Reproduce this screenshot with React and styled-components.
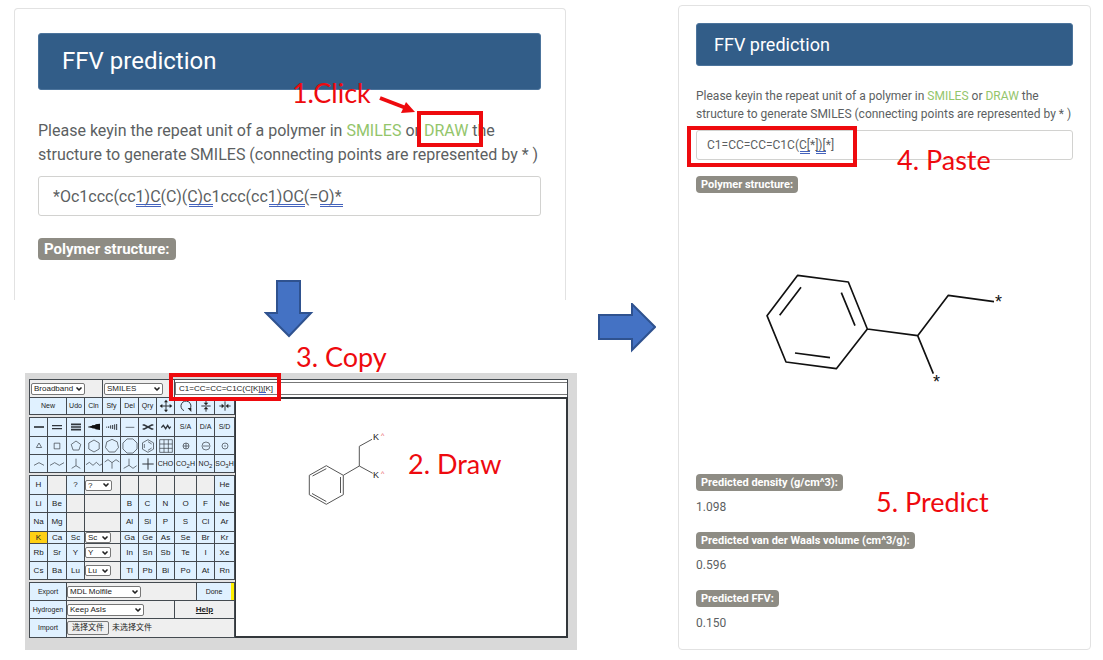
import React from "react";
import styled, { createGlobalStyle, css } from "styled-components";
import { ChevronDown } from "lucide-react";

const GlobalStyle = createGlobalStyle`
  *, *::before, *::after { box-sizing: border-box; }
  body { margin: 0; background: #fff; font-family: Roboto, "Liberation Sans", sans-serif; color: #5c5f62; }
  button, input, select { font: inherit; color: inherit; margin: 0; }
`;

const RED = "#ee0a0e";
const LINE = "#444a50";
const ARIAL = '"Liberation Sans", "Noto Sans CJK SC", sans-serif';

/* ---------- page ---------- */

const Page = styled.main`
  display: grid;
  grid-template-columns: 563fr 101fr 413fr;
  padding: 5px 12px 8px 14px;
`;

const LeftColumn = styled.div`
  display: flex;
  flex-direction: column;
  padding-top: 3px;
  min-width: 0;
`;

const MiddleColumn = styled.div`
  display: flex;
  align-items: center;
  justify-content: center;
  padding-right: 2px;
`;

const DownRow = styled.div`
  display: flex;
  justify-content: center;
  margin-top: -20px;
  padding-right: 13px;
`;

const BlockArrow = styled.svg`
  display: block;
  fill: #4472c4;
  stroke: #2f528f;
  stroke-width: 2;
`;

/* ---------- annotations ---------- */

const Note = styled.span`
  font-family: Lato, "Liberation Sans", sans-serif;
  font-size: 27px;
  line-height: 30px;
  font-weight: 400;
  color: ${RED};
  white-space: nowrap;
`;

const FloatingNote = styled(Note)`
  position: absolute;
  left: ${(p) => p.$left}px;
  top: ${(p) => p.$top}px;
  pointer-events: none;
`;

const CopyNote = styled(Note)`
  padding: 4px 0 1px 282px;
`;

const Highlight = styled.span`
  position: absolute;
  left: ${(p) => p.$left}px;
  top: ${(p) => p.$top}px;
  width: ${(p) => p.$width}px;
  height: ${(p) => p.$height}px;
  border: 4px solid ${RED};
  pointer-events: none;
`;

const Pointer = styled.svg`
  position: absolute;
  left: -46px;
  top: -24px;
  pointer-events: none;
`;

/* ---------- prediction card ---------- */

const Card = styled.section`
  border: 1px solid #e2e2e2;
  border-radius: 4px;
  padding: 17px;
  font-size: 12px;
  line-height: 18px;
  ${(p) =>
    p.$large &&
    css`
      margin-right: 11px;
      padding: 24px 24px 40px 23px;
      border-bottom: 0;
      border-radius: 4px 4px 0 0;
      font-size: 16px;
      line-height: 24px;
    `}
`;

const CardTitle = styled.h1`
  margin: 0;
  padding: ${(p) => (p.$large ? "12px 23px" : "8px 17px")};
  border: 1px solid #4c749c;
  border-radius: 3px;
  background: #325d88;
  color: #fff;
  font-weight: 400;
  font-size: ${(p) => (p.$large ? 24 : 18)}px;
  line-height: ${(p) => (p.$large ? 31 : 25)}px;
`;

const Prompt = styled.label`
  display: block;
  margin: ${(p) => (p.$large ? "29px 0 9px" : "21px 0 7px")};
  white-space: nowrap;
`;

const GreenLink = styled.a`
  position: relative;
  display: inline-block;
  color: #93c56b;
  text-decoration: none;
`;

const Field = styled.div`
  position: relative;
`;

const SmilesInput = styled.input`
  display: block;
  width: 100%;
  height: ${(p) => (p.$large ? 40 : 30)}px;
  padding: 0 ${(p) => (p.$large ? 14 : 10)}px;
  border: 1px solid #d2d2d0;
  border-radius: 3px;
  background: #fff;
  outline: 0;
`;

const SpellMark = styled.i`
  position: absolute;
  left: ${(p) => p.$left}px;
  top: ${(p) => p.$top}px;
  width: ${(p) => p.$width}px;
  height: 3px;
  border: solid #4463bd;
  border-width: 1px 0;
  pointer-events: none;
`;

const Badge = styled.span`
  display: block;
  width: fit-content;
  padding: 0 ${(p) => (p.$large ? 6 : 5)}px;
  border-radius: 4px;
  background: #8e8c84;
  color: #fff;
  font-weight: 700;
  font-size: ${(p) => (p.$large ? 15 : 11)}px;
  line-height: ${(p) => (p.$large ? 22 : 17)}px;
`;

const StructureLabel = styled.div`
  margin-top: ${(p) => (p.$large ? 22 : 16)}px;
`;

const Structure = styled.div`
  padding: 57px 0 74px 44px;
  svg { display: block; }
`;

const Results = styled.dl`
  position: relative;
  display: grid;
  gap: 16px;
  margin: 0;
  dt { margin: 0 0 7px; }
  dd { margin: 0; }
`;

/* ---------- structure editor ---------- */

const Editor = styled.section`
  margin-left: 11px;
  padding: 6px 9px 12px 4px;
  background: #d9d9d9;
  font-family: ${ARIAL};
  font-size: 8px;
  line-height: 10px;
  color: #222;
`;

const FormatBar = styled.div`
  display: grid;
  grid-template-columns: 72px 71px 1fr;
  gap: 1px;
  padding: 1px 1px 0;
  background: ${LINE};
`;

const FormatCell = styled.div`
  position: relative;
  display: flex;
  align-items: center;
  height: 17px;
  padding: 0 1px;
  background: #efefef;
`;

const OutputCell = styled(FormatCell)`
  padding: 0;
  background: #fff;
`;

const OutputInput = styled.input`
  flex: 1;
  min-width: 0;
  height: 13px;
  padding: 0 3px;
  border: 1px solid #777;
  border-right: 0;
  background: #fff;
  outline: 0;
`;

const Workspace = styled.div`
  display: flex;
  background: #e4e4e4;
`;

const Palette = styled.div`
  flex: none;
  display: flex;
  flex-direction: column;
  gap: 2px;
`;

const Group = styled.div`
  display: grid;
  grid-template-columns: 17px 18px 17px 17px 17px 17px 17px 17px 21px 17px 19px;
  grid-template-rows: ${(p) => p.$rows};
  gap: 1px;
  padding: 1px;
  background: ${LINE};
`;

const cell = css`
  grid-column: span ${(p) => p.$span || 1};
  display: flex;
  align-items: center;
  min-width: 0;
  min-height: 0;
`;

const ToolButton = styled.button`
  ${cell}
  justify-content: center;
  padding: 0;
  border: 0;
  overflow: hidden;
  background: ${(p) => (p.$active ? "#ffd014" : "#e0f1ff")};
  font-size: ${(p) => (p.$small ? 7 : 8)}px;
  line-height: 10px;
  white-space: nowrap;
  svg { flex: none; display: block; }
  sub { font-size: 6px; line-height: 6px; align-self: flex-end; padding-bottom: 3px; }
`;

const DoneButton = styled(ToolButton)`
  border-right: 3px solid #fff000;
`;

const PlainCell = styled.div`
  ${cell}
  padding: 0;
  background: #efefef;
`;

const HelpCell = styled(PlainCell)`
  justify-content: center;
  a { color: inherit; font-weight: 700; }
`;

const Picker = styled.span`
  position: relative;
  display: flex;
  width: ${(p) => p.$width}px;
  select {
    appearance: none;
    width: 100%;
    height: ${(p) => p.$height || 12}px;
    padding: 0 2px;
    border: 1px solid #777;
    border-radius: 2px;
    background: #fff;
    line-height: 10px;
  }
  svg { position: absolute; right: 2px; top: 50%; margin-top: -4px; pointer-events: none; }
`;

const FileLabel = styled.label`
  display: flex;
  align-items: center;
  gap: 3px;
  input { position: absolute; width: 1px; height: 1px; opacity: 0; }
`;

const FileButton = styled.span`
  padding: 0 4px;
  border: 1px solid #777;
  border-radius: 2px;
  line-height: 12px;
`;

const Canvas = styled.div`
  flex: 1;
  display: flex;
  align-items: flex-start;
  min-width: 0;
  padding: 25px 0 0 64px;
  border: 2px solid #33373b;
  border-left-width: 1px;
  background: #fff;
  svg { flex: none; }
`;

const DrawNote = styled(Note)`
  padding: 25px 0 0 15px;
`;

/* ---------- icons ---------- */

const Icon = ({ children, w = 2 }) => (
  <svg width="18" height="18" viewBox="-27 -27 54 54" fill="none" stroke="#30363c" strokeWidth={w}>
    {children}
  </svg>
);

const ring = (n, r, turn = 0) =>
  Array.from({ length: n }, (_, i) => {
    const a = -Math.PI / 2 + turn + (i * 2 * Math.PI) / n;
    return `${(r * Math.cos(a)).toFixed(1)},${(r * Math.sin(a)).toFixed(1)}`;
  }).join(" ");

const Ring = ({ n, r, turn }) => (
  <Icon>
    <polygon points={ring(n, r, turn)} />
  </Icon>
);

const Path = ({ d, w }) => (
  <Icon w={w}>
    <path d={d} />
  </Icon>
);

const TOOLS = [
  ["Move", <Icon w={3}><path d="M-13 0H13M0-13V13" /><path fill="#222" stroke="none" d="M0-19l6 8H-6zM0 19l6-8H-6zM-19 0l8-6V6zM19 0l-8-6V6z" /></Icon>],
  ["Rotate", <Icon w={3}><path d="M-6 14A15 15 0 1 1 12 9" /><path fill="#222" stroke="none" d="M5 6h11v12z" /></Icon>],
  ["Flip vertically", <Icon w={3}><path d="M-14 0H14M0-17V-8M0 17V8" /><path fill="#222" stroke="none" d="M-7-10H7L0-2zM-7 10H7L0 2z" /></Icon>],
  ["Flip horizontally", <Icon w={3}><path d="M0-14V14M-17 0H-8M17 0H8" /><path fill="#222" stroke="none" d="M-10-7V7L-2 0zM10-7V7L2 0z" /></Icon>],
];

const BONDS = [
  ["Single bond", <Path w={5} d="M-15 0H15" />],
  ["Double bond", <Path w={4} d="M-15-4H15M-15 5H15" />],
  ["Triple bond", <Path w={5} d="M-15-8H15M-15 0H15M-15 8H15" />],
  ["Wedge bond", <Icon><path fill="#111" stroke="none" d="M-18-1L-6-4V-5L4-6V-8L18-10V9L4 7V5L-6 4V3L-18 1z" /></Icon>],
  ["Hash bond", <Icon w={3}><path d="M-16-1V2M-10-2V3M-4-5V5M2-6V6M8-8V8M14-9V9" /></Icon>],
  ["Any bond", <Path w={2} d="M-13 1H13" />],
  ["Crossed bond", <Path w={5} d="M-16-6H-11L11 6H16M-16 6H-11L11-6H16" />],
  ["Wavy bond", <Path w={4} d="M-14 2L-8-5L-1 5L5-5L10 4L14-1" />],
  ["Single or aromatic", "S/A"],
  ["Double or aromatic", "D/A"],
  ["Single or double", "S/D"],
];

const RINGS = [
  ["Cyclopropane", <Ring n={3} r={9} />],
  ["Cyclobutane", <Ring n={4} r={12} turn={Math.PI / 4} />],
  ["Cyclopentane", <Ring n={5} r={15} />],
  ["Cyclohexane", <Ring n={6} r={18} />],
  ["Cycloheptane", <Ring n={7} r={20} />],
  ["Cyclooctane", <Ring n={8} r={23} turn={Math.PI / 8} />],
  ["Benzene", <Icon><polygon points={ring(6, 19)} /><path d="M-11-6V6M0 13L11 6M0-13L11-6" /></Icon>],
  ["Template grid", <Icon w={2}><path d="M-19-19H19V19H-19zM-19-6H19M-19 7H19M-6-19V19M7-19V19" /></Icon>],
  ["Positive charge", <Icon><circle r="9" /><path d="M-9 0H9M0-9V9" /></Icon>],
  ["Negative charge", <Icon><circle r="12" /><path d="M-9 0H9" /></Icon>],
  ["Radical", <Icon><circle r="9" /><circle r="1" /></Icon>],
];

const CHAINS = [
  ["Ethyl", <Path d="M-15 4L0-4L15 4" />],
  ["Propyl", <Path d="M-21 4L-7-4L7 4L21-4" />],
  ["Isopropyl", <Path d="M0-16V5M0 5L-13 13M0 5L13 13" />],
  ["Butyl", <Path d="M-24 2L-14-5L-3 4L7-5L17 4L24 0" />],
  ["Isobutyl", <Path d="M-22-6L-12-13L0-4L12-13L22-6M0-4V14" />],
  ["Sec-butyl", <Path d="M-3-16V4L-19 13M-3 4L9 13L20 5" />],
  ["Tert-butyl", <Path w={3} d="M-17 0H17M0-17V17" />],
  ["Aldehyde", "CHO"],
  ["Carboxyl", <>CO<sub>2</sub>H</>],
  ["Nitro", <>NO<sub>2</sub></>],
  ["Sulfonyl", <>SO<sub>3</sub>H</>],
];

const ELEMENTS = [
  ["H", "", "?", ["?", 27], "", "", "", "", "", "He"],
  ["Li", "Be", "", null, "B", "C", "N", "O", "F", "Ne"],
  ["Na", "Mg", "", null, "Al", "Si", "P", "S", "Cl", "Ar"],
  ["K", "Ca", "Sc", ["Sc", 26], "Ga", "Ge", "As", "Se", "Br", "Kr"],
  ["Rb", "Sr", "Y", ["Y", 26], "In", "Sn", "Sb", "Te", "I", "Xe"],
  ["Cs", "Ba", "Lu", ["Lu", 26], "Tl", "Pb", "Bi", "Po", "At", "Rn"],
];

const RESULTS = [
  ["Predicted density (g/cm^3):", "1.098"],
  ["Predicted van der Waals volume (cm^3/g):", "0.596"],
  ["Predicted FFV:", "0.150"],
];

/* ---------- parts ---------- */

const Select = ({ label, value, width, height }) => (
  <Picker $width={width} $height={height}>
    <select aria-label={label} defaultValue={value}>
      <option>{value}</option>
    </select>
    <ChevronDown size={8} strokeWidth={5} />
  </Picker>
);

const IconRow = ({ items }) =>
  items.map(([name, drawing]) => (
    <ToolButton key={name} aria-label={name} $small>
      {drawing}
    </ToolButton>
  ));

const Elements = () =>
  ELEMENTS.map((row, r) =>
    row.map((item, c) => {
      const key = `${r}-${c}`;
      if (c === 3)
        return (
          <PlainCell key={key} $span={2}>
            {item && <Select label={`Element list ${item[0]}`} value={item[0]} width={item[1]} height={11} />}
          </PlainCell>
        );
      if (!item) return <PlainCell key={key} />;
      return (
        <ToolButton key={key} $active={item === "K"}>
          {item}
        </ToolButton>
      );
    })
  );

const SmallMolecule = () => (
  <svg width="93" height="85" viewBox="300 425 93 85" fill="none" stroke="#555" strokeWidth="1">
    <path d="M326.3 466.7L343.3 476.3V495.7L326.3 505.3L309.3 495.7V476.3zM343.3 476.3L359.3 467V447.3L372 440.3M359.3 467L372.7 474.3" />
    <path d="M340.5 478V494M312.5 477L326.3 469.7M312 494.5L326.3 502.5" />
    <g stroke="none" fill="#222" fontSize="9" fontFamily="Liberation Sans, sans-serif">
      <text x="373" y="441">K</text>
      <text x="373" y="479">K</text>
      <text x="381" y="439" fontSize="7" fill="#e8505a">^</text>
      <text x="381" y="477" fontSize="7" fill="#e8505a">^</text>
    </g>
  </svg>
);

const BigMolecule = () => (
  <svg width="300" height="150" viewBox="0 0 900 450" fill="none" stroke="#111" strokeWidth="5">
    <path
      strokeLinejoin="round"
      d="M173 76L325 96L382 237L289 356L138 336L81 197zM382 237L533 257L625 136L762 155M533 257L580 371"
    />
    <path d="M183 112L119 196M304 128L345 227M165 309L270 323" />
    <g stroke="none" fill="#111" fontSize="54" fontFamily="Liberation Sans, sans-serif">
      <text x="765" y="173">*</text>
      <text x="579" y="413">*</text>
    </g>
  </svg>
);

const PredictionCard = ({ large, id, value, marks, markTop, drawNote, fieldNote, children }) => (
  <Card $large={large}>
    <CardTitle $large={large}>FFV prediction</CardTitle>
    <Prompt $large={large} htmlFor={id}>
      Please keyin the repeat unit of a polymer in <GreenLink href="#smiles">SMILES</GreenLink> or{" "}
      <GreenLink href="#draw">DRAW{drawNote}</GreenLink> the
      <br />
      structure to generate SMILES (connecting points are represented by * )
    </Prompt>
    <Field>
      <SmilesInput id={id} $large={large} defaultValue={value} spellCheck={false} />
      {marks.map(([left, width]) => (
        <SpellMark key={left} $left={left} $width={width} $top={markTop} />
      ))}
      {fieldNote}
    </Field>
    <StructureLabel $large={large}>
      <Badge $large={large}>Polymer structure:</Badge>
    </StructureLabel>
    {children}
  </Card>
);

export default function App() {
  return (
    <>
      <GlobalStyle />
      <Page>
        <LeftColumn>
          <PredictionCard
            large
            id="smiles-before"
            value="*Oc1ccc(cc1)C(C)(C)c1ccc(cc1)OC(=O)*"
            marks={[[98, 25], [151, 24], [231, 36], [282, 23]]}
            markTop={28}
            drawNote={
              <>
                <Highlight $left={-7} $top={-8} $width={66} $height={36} />
                <FloatingNote $left={-132} $top={-41}>1.Click</FloatingNote>
                <Pointer width="40" height="20" viewBox="0 0 40 20">
                  <path d="M2 3L28 13" stroke={RED} strokeWidth="4" />
                  <path d="M28 7L37 17L23 18z" fill={RED} />
                </Pointer>
              </>
            }
          />
          <DownRow>
            <BlockArrow width="50" height="58" viewBox="0 0 50 58">
              <path d="M13 1H36V33H47L25 56L2 33H13z" />
            </BlockArrow>
          </DownRow>
          <CopyNote>3. Copy</CopyNote>
          <Editor>
            <FormatBar>
              <FormatCell>
                <Select label="Connection" value="Broadband" width={54} />
              </FormatCell>
              <FormatCell>
                <Select label="Format" value="SMILES" width={59} />
              </FormatCell>
              <OutputCell>
                <OutputInput aria-label="Generated SMILES" defaultValue="C1=CC=CC=C1C(C[K])[K]" spellCheck={false} />
                <SpellMark $left={84} $top={12} $width={7} />
                <Highlight $left={-6} $top={-7} $width={112} $height={28} />
              </OutputCell>
            </FormatBar>
            <Workspace>
              <Palette>
                <Group $rows="16px">
                  <ToolButton $span={2} $small>New</ToolButton>
                  {["Udo", "Cln", "Sfy", "Del", "Qry"].map((t) => (
                    <ToolButton key={t} $small>{t}</ToolButton>
                  ))}
                  <IconRow items={TOOLS} />
                </Group>
                <Group $rows="18px 17px 17px">
                  <IconRow items={BONDS} />
                  <IconRow items={RINGS} />
                  <IconRow items={CHAINS} />
                </Group>
                <Group $rows="18px 17px 18px 11px 17px 17px">
                  <Elements />
                </Group>
                <Group $rows="17px 17px 18px">
                  <ToolButton $span={2} $small>Export</ToolButton>
                  <PlainCell $span={7}>
                    <Select label="Export format" value="MDL Molfile" width={74} />
                  </PlainCell>
                  <DoneButton $span={2} $small>Done</DoneButton>
                  <ToolButton $span={2} $small>Hydrogen</ToolButton>
                  <PlainCell $span={6}>
                    <Select label="Hydrogen handling" value="Keep AsIs" width={77} />
                  </PlainCell>
                  <HelpCell $span={3}>
                    <a href="#help">Help</a>
                  </HelpCell>
                  <ToolButton $span={2} $small>Import</ToolButton>
                  <PlainCell $span={9}>
                    <FileLabel>
                      <input type="file" />
                      <FileButton>选择文件</FileButton>
                      未选择文件
                    </FileLabel>
                  </PlainCell>
                </Group>
              </Palette>
              <Canvas>
                <SmallMolecule />
                <DrawNote>2. Draw</DrawNote>
              </Canvas>
            </Workspace>
          </Editor>
        </LeftColumn>

        <MiddleColumn>
          <BlockArrow width="58" height="50" viewBox="0 0 58 50">
            <path d="M1 12H34V1L57 24L34 47V36H1z" />
          </BlockArrow>
        </MiddleColumn>

        <PredictionCard
          id="smiles-after"
          value="C1=CC=CC=C1C(C[*])[*]"
          marks={[[104, 10], [120, 10]]}
          markTop={21}
          fieldNote={
            <>
              <Highlight $left={-9} $top={-4} $width={170} $height={41} />
              <FloatingNote $left={201} $top={15}>4. Paste</FloatingNote>
            </>
          }
        >
          <Structure>
            <BigMolecule />
          </Structure>
          <Results>
            {RESULTS.map(([name, value]) => (
              <div key={name}>
                <dt>
                  <Badge>{name}</Badge>
                </dt>
                <dd>{value}</dd>
              </div>
            ))}
            <FloatingNote as="div" $left={180} $top={13}>5. Predict</FloatingNote>
          </Results>
        </PredictionCard>
      </Page>
    </>
  );
}
